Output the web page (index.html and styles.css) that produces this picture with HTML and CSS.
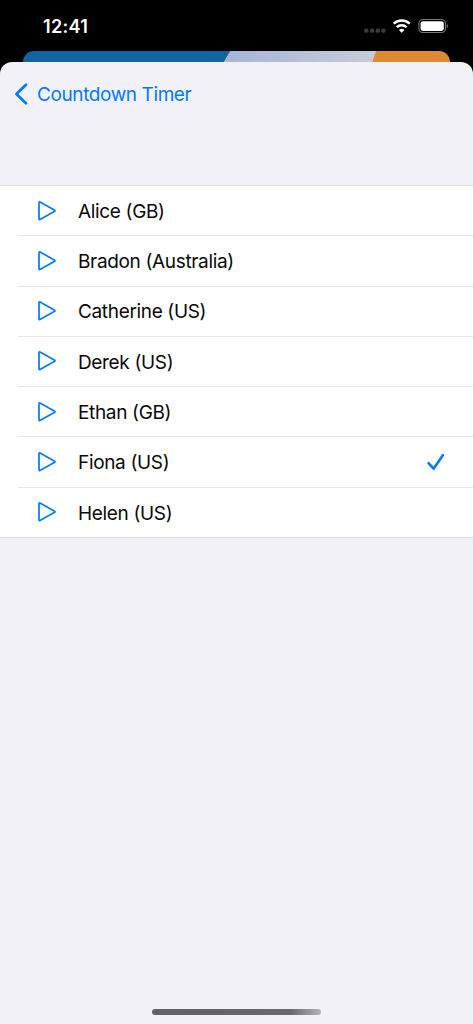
FILE: index.html
```
<!DOCTYPE html>
<html lang="en">
<head>
<meta charset="utf-8">
<title>Countdown Timer</title>
<link rel="stylesheet" href="styles.css">
</head>
<body>
<svg class="defs" width="0" height="0"><symbol id="play" viewBox="0 0 20 22"><path d="M2 2.5V19a.7.7 0 0 0 1 .6L17.7 11.3a.6.6 0 0 0 0-1L3 1.9a.7.7 0 0 0-1 .6Z" fill="none" stroke="#007aff" stroke-width="1.7" stroke-linejoin="round"/></symbol></svg>
<div class="screen">
  <header class="status">
    <span class="time">12:41</span>
    <svg class="indicators" width="88" height="20" viewBox="0 0 88 20">
      <g fill="#3c3c3e"><rect x="4.2" y="12.6" width="4.2" height="4.2" rx="1.5"/><rect x="10" y="12.6" width="4.2" height="4.2" rx="1.5"/><rect x="15.7" y="12.6" width="4.2" height="4.2" rx="1.5"/><rect x="21.3" y="12.6" width="4.2" height="4.2" rx="1.5"/></g>
      <g fill="none" stroke="#fff" stroke-width="2.5"><path d="M33.7 7.6a12 12 0 0 1 16 0"/><path d="M36.8 11.2a7.2 7.2 0 0 1 9.8 0"/></g>
      <path d="M39.3 14a4 4 0 0 1 4.8 0L41.7 16.5Z" fill="#fff" stroke="#fff" stroke-width=".6"/>
      <rect x="58.9" y="3.5" width="26.6" height="13" rx="4" fill="none" stroke="#77777a" stroke-width="1.1"/>
      <rect x="60.6" y="5.2" width="23.2" height="9.7" rx="2.4" fill="#fff"/>
      <path d="M86.8 8c1.5.8 1.5 3.2 0 4Z" fill="#77777a"/>
    </svg>
  </header>
  <div class="backdrop">
    <svg width="427" height="24" viewBox="0 0 427 24"><defs><linearGradient id="sky"><stop stop-color="#a4b4d8"/><stop offset="1" stop-color="#c7ccd8"/></linearGradient></defs><path fill="#1065a0" d="M0 0H207L193 24H0Z"/><path fill="url(#sky)" d="M207 0H354L346 24H193Z"/><path fill="#df8932" d="M353 0H427V24H345Z"/></svg>
  </div>
  <main class="sheet">
    <nav class="nav">
      <svg class="back" width="16" height="24" viewBox="0 0 16 24"><path d="M13 2.8 3.4 12 13 21.2" fill="none" stroke="#007aff" stroke-width="2.7" stroke-linecap="round" stroke-linejoin="round"/></svg>
      <span class="nav-title">Countdown Timer</span>
    </nav>
    <ul class="list">
      <li class="row"><svg class="play"><use href="#play"/></svg><span class="name">Alice (GB)</span></li>
      <li class="row"><svg class="play"><use href="#play"/></svg><span class="name">Bradon (Australia)</span></li>
      <li class="row"><svg class="play"><use href="#play"/></svg><span class="name">Catherine (US)</span></li>
      <li class="row"><svg class="play"><use href="#play"/></svg><span class="name">Derek (US)</span></li>
      <li class="row"><svg class="play"><use href="#play"/></svg><span class="name">Ethan (GB)</span></li>
      <li class="row"><svg class="play"><use href="#play"/></svg><span class="name">Fiona (US)</span><svg class="check" width="20" height="20" viewBox="0 0 20 20"><path d="M2.5 11.2 7.6 16.7 16.9 3.2" fill="none" stroke="#007aff" stroke-width="2.6" stroke-linecap="round" stroke-linejoin="round"/></svg></li>
      <li class="row"><svg class="play"><use href="#play"/></svg><span class="name">Helen (US)</span></li>
    </ul>
    <div class="home"></div>
  </main>
</div>
</body>
</html>
```

FILE: styles.css
```
* { box-sizing: border-box; }
body { margin: 0; background: #000; font-family: Inter, "Liberation Sans", sans-serif; }
.defs { display: block; }
.screen { width: 473px; height: 1024px; display: flex; flex-direction: column; overflow: hidden; background: #000; }
.status { height: 51px; flex: none; display: flex; justify-content: space-between; padding: 16px 25px 0 43px; color: #fff; }
.time { font-size: 18px; font-weight: 600; line-height: 21px; letter-spacing: .3px; }
.indicators { display: block; }
.backdrop { height: 24px; flex: none; margin: 0 23px -13px; border-radius: 11px 11px 0 0; overflow: hidden; }
.backdrop svg { display: block; }
.sheet { position: relative; flex: 1; display: flex; flex-direction: column; background: #f2f1f7; border-radius: 12px 12px 0 0; }
.nav { height: 123px; flex: none; display: flex; align-items: flex-start; padding: 20px 0 0 13px; color: #007aff; }
.back { display: block; margin-right: 8px; }
.nav-title { font-size: 19px; line-height: 24px; letter-spacing: -.4px; white-space: nowrap; padding-top: 1px; }
.list { list-style: none; margin: 0; padding: 0; background: #fff; border-top: 1px solid #dfdfe3; border-bottom: 1px solid #dfdfe3; }
.row { height: 50.25px; display: flex; align-items: center; margin-left: 18px; padding: 0 27px 0 19px; border-bottom: 1px solid #e5e5e7; }
.row:last-child { height: 49.5px; border-bottom: 0; }
.play { width: 20px; height: 22px; margin-right: 21px; }
.name { flex: 1; color: #080808; font-size: 19px; line-height: 24px; letter-spacing: -.34px; white-space: nowrap; padding-top: 2.5px; }
.home { width: 169px; height: 6px; border-radius: 3px; margin: auto auto 9px; background: linear-gradient(90deg, #626264 0%, #69696b 82%, #b4b4b7 100%); }
```
